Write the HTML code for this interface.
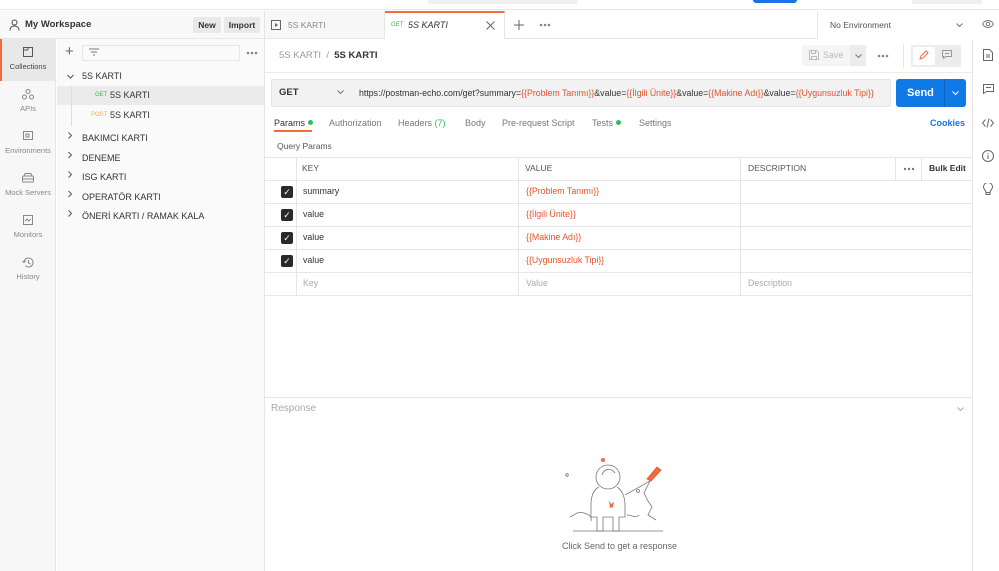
<!DOCTYPE html>
<html><head><meta charset="utf-8"><style>
*{box-sizing:border-box;margin:0;padding:0}
body{width:999px;height:571px;overflow:hidden;font-family:"Liberation Sans",sans-serif;font-size:9px;color:#333;background:#fff;position:relative}
.a{position:absolute}
.red{color:#e5532d}
.dots{position:absolute;width:12px;height:4px}
</style></head><body>
<div class="a" style="left:0;top:0;width:999px;height:10px;background:#fff;border-bottom:1px solid #e8e8e8"></div>
<div class="a" style="left:428px;top:0;width:150px;height:4px;background:#f0f0f0;border-radius:0 0 3px 3px"></div>
<div class="a" style="left:753px;top:0;width:44px;height:3px;background:#1a73e8;border-radius:0 0 3px 3px"></div>
<div class="a" style="left:912px;top:0;width:70px;height:4px;background:#f0f0f0"></div>
<!-- left header -->
<div class="a" style="left:0;top:11px;width:265px;height:28px;background:#f9f9f9;border-bottom:1px solid #e6e6e6;border-right:1px solid #e6e6e6"></div>
<svg class="a" style="left:9px;top:19px" width="11" height="12" viewBox="0 0 11 12" fill="none" stroke="#444" stroke-width="1"><circle cx="5.5" cy="3.5" r="2.5"/><path d="M1 11.5c0-3 2-4.5 4.5-4.5s4.5 1.5 4.5 4.5"/></svg>
<div class="a" style="left:25px;top:19px;font-size:9.5px;font-weight:bold;color:#333">My Workspace</div>
<div class="a" style="left:193px;top:17px;width:28px;height:16px;background:#e9e9e9;border-radius:2px;font-size:8.5px;font-weight:bold;text-align:center;line-height:16px">New</div>
<div class="a" style="left:224px;top:17px;width:36px;height:16px;background:#e9e9e9;border-radius:2px;font-size:8.5px;font-weight:bold;text-align:center;line-height:16px">Import</div>
<!-- icon rail -->
<div class="a" style="left:0;top:39px;width:56px;height:532px;background:#f7f7f7;border-right:1px solid #e6e6e6"></div>
<div class="a" style="left:0;top:39px;width:56px;height:42px;background:#e8e8e8;border-left:2px solid #f26b3a"></div>
<svg class="a" style="left:23px;top:47px" width="10" height="10" viewBox="0 0 10 10" fill="none" stroke="#555"><rect x=".5" y=".5" width="9" height="9"/><path d="M.5 3h4l1-2.5"/></svg>
<div class="a" style="left:0;top:62px;width:56px;text-align:center;font-size:7.5px;color:#444">Collections</div>
<svg class="a" style="left:22px;top:89px" width="12" height="11" viewBox="0 0 12 11" fill="none" stroke="#888"><circle cx="6" cy="2.5" r="2"/><circle cx="2.5" cy="8" r="2"/><circle cx="9.5" cy="8" r="2"/></svg>
<div class="a" style="left:0;top:104px;width:56px;text-align:center;font-size:7.5px;color:#888">APIs</div>
<svg class="a" style="left:23px;top:131px" width="10" height="10" viewBox="0 0 10 10" fill="none" stroke="#888"><rect x=".5" y=".5" width="9" height="8"/><rect x="3" y="3" width="3" height="3"/></svg>
<div class="a" style="left:0;top:146px;width:56px;text-align:center;font-size:7.5px;color:#888">Environments</div>
<svg class="a" style="left:22px;top:173px" width="12" height="10" viewBox="0 0 12 10" fill="none" stroke="#888"><rect x=".5" y="3" width="11" height="6" rx="1"/><path d="M2 3l1-2.5h6L10 3M.5 6h11"/></svg>
<div class="a" style="left:0;top:188px;width:56px;text-align:center;font-size:7.5px;color:#888">Mock Servers</div>
<svg class="a" style="left:23px;top:215px" width="10" height="10" viewBox="0 0 10 10" fill="none" stroke="#888"><rect x=".5" y=".5" width="9" height="9"/><path d="M2 6l2-2 1.5 2L8 4"/></svg>
<div class="a" style="left:0;top:230px;width:56px;text-align:center;font-size:7.5px;color:#888">Monitors</div>
<svg class="a" style="left:22px;top:257px" width="12" height="11" viewBox="0 0 12 11" fill="none" stroke="#888"><path d="M2 5.5a4.5 4.5 0 1 1 1.3 3.2M.5 4l1.5 1.5L3.5 4M6.5 3v3l2 1"/></svg>
<div class="a" style="left:0;top:272px;width:56px;text-align:center;font-size:7.5px;color:#888">History</div>
<!-- tree -->
<div class="a" style="left:57px;top:39px;width:208px;height:532px;background:#fafafa;border-right:1px solid #e6e6e6"></div>
<div class="a" style="left:65px;top:44px;font-size:15px;color:#666;line-height:15px">+</div>
<div class="a" style="left:82px;top:45px;width:158px;height:16px;border:1px solid #e6e6e6;background:#fafafa"></div>
<svg class="a" style="left:89px;top:48px" width="10" height="8" viewBox="0 0 10 8" stroke="#777"><path d="M0 1h10M2 4h6M4 7h2"/></svg>
<svg class="dots" style="left:246px;top:51px" viewBox="0 0 12 4" fill="#888"><circle cx="2" cy="2" r="1.3"/><circle cx="6" cy="2" r="1.3"/><circle cx="10" cy="2" r="1.3"/></svg>
<svg class="a" style="left:67px;top:74px" width="7" height="5" viewBox="0 0 7 5" fill="none" stroke="#555"><path d="M.5.5l3 3-3 3" transform="rotate(90 3.5 2.5) translate(1.5 -1)"/></svg>
<div class="a" style="left:82px;top:71px;font-size:9px;color:#333">5S KARTI</div>
<div class="a" style="left:57px;top:86px;width:207px;height:19px;background:#ebebeb"></div>
<div class="a" style="left:71px;top:86px;width:1px;height:40px;background:#ddd"></div>
<div class="a" style="left:95px;top:92px;font-size:6px;color:#2ebd59">GET</div>
<div class="a" style="left:110px;top:90px;font-size:9px">5S KARTI</div>
<div class="a" style="left:91px;top:112px;font-size:6px;color:#f5b342">POST</div>
<div class="a" style="left:110px;top:110px;font-size:9px">5S KARTI</div>
<svg class="a" style="left:68px;top:132px" width="5" height="90" viewBox="0 0 5 90" fill="none" stroke="#555"><path d="M.5.5l3 3-3 3M.5 20l3 3-3 3M.5 39.5l3 3-3 3M.5 59l3 3-3 3M.5 78.5l3 3-3 3"/></svg>
<div class="a" style="left:82px;top:129px;line-height:19.5px;font-size:9px;color:#333">BAKIMCI KARTI<br>DENEME<br>ISG KARTI<br>OPERATÖR KARTI<br>ÖNERİ KARTI / RAMAK KALA</div>
<!-- tabs row -->
<div class="a" style="left:265px;top:11px;width:707px;height:28px;border-bottom:1px solid #e6e6e6;background:#fff"></div>
<div class="a" style="left:265px;top:11px;width:120px;height:28px;background:#f7f7f7;border-right:1px solid #e6e6e6;border-bottom:1px solid #e6e6e6"></div>
<svg class="a" style="left:271px;top:20px" width="10" height="10" viewBox="0 0 10 10"><rect x=".5" y=".5" width="9" height="9" fill="none" stroke="#666"/><path d="M4 3l3 2-3 2z" fill="#666"/></svg>
<div class="a" style="left:288px;top:20px;font-size:8.5px;color:#888">5S KARTI</div>
<div class="a" style="left:385px;top:11px;width:120px;height:28px;background:#fff;border-top:2px solid #f26b3a;border-right:1px solid #e6e6e6"></div>
<div class="a" style="left:391px;top:22px;font-size:6px;color:#2ebd59;font-style:italic">GET</div>
<div class="a" style="left:408px;top:20px;font-size:9px;font-style:italic;color:#333">5S KARTI</div>
<svg class="a" style="left:486px;top:21px" width="9" height="9" viewBox="0 0 9 9" stroke="#666"><path d="M.5.5l8 8M8.5.5l-8 8"/></svg>
<svg class="a" style="left:514px;top:20px" width="10" height="10" viewBox="0 0 10 10" stroke="#666"><path d="M5 0v10M0 5h10"/></svg>
<svg class="dots" style="left:539px;top:23px" viewBox="0 0 12 4" fill="#888"><circle cx="2" cy="2" r="1.3"/><circle cx="6" cy="2" r="1.3"/><circle cx="10" cy="2" r="1.3"/></svg>
<div class="a" style="left:817px;top:11px;width:155px;height:28px;border-left:1px solid #e6e6e6;background:#fff"></div>
<div class="a" style="left:830px;top:20px;font-size:8.5px;color:#555">No Environment</div>
<svg class="a" style="left:956px;top:23px" width="7" height="5" viewBox="0 0 7 5" fill="none" stroke="#777"><path d="M.5.5l3 3 3-3"/></svg>
<svg class="a" style="left:982px;top:20px" width="12" height="8" viewBox="0 0 12 8" fill="none" stroke="#777"><path d="M.5 4C2 1.5 4 .5 6 .5s4 1 5.5 3.5C10 6.5 8 7.5 6 7.5S2 6.5.5 4z"/><circle cx="6" cy="4" r="1.7"/></svg>
<!-- right rail -->
<div class="a" style="left:972px;top:39px;width:27px;height:532px;background:#fff;border-left:1px solid #e6e6e6"></div>
<svg class="a" style="left:983px;top:49px" width="10" height="12" viewBox="0 0 10 12" fill="none" stroke="#666"><path d="M.5.5h6l3 3v8h-9z M3 6h4M3 8h4"/></svg>
<svg class="a" style="left:983px;top:84px" width="11" height="10" viewBox="0 0 11 10" fill="none" stroke="#666"><path d="M.5.5h10v7h-7l-3 2z M3 3.5h5"/></svg>
<svg class="a" style="left:982px;top:118px" width="12" height="10" viewBox="0 0 12 10" fill="none" stroke="#666"><path d="M3.5 1.5L.5 5l3 3.5M8.5 1.5l3 3.5-3 3.5M7 .5L5 9.5"/></svg>
<svg class="a" style="left:982px;top:150px" width="12" height="12" viewBox="0 0 12 12" fill="none" stroke="#666"><circle cx="6" cy="6" r="5.5"/><path d="M6 5v4M6 3v1"/></svg>
<svg class="a" style="left:983px;top:183px" width="10" height="12" viewBox="0 0 10 12" fill="none" stroke="#666"><path d="M3 9.5h4v2H3z M3 9.5C3 7 .5 6.5.5 4a4.5 4.5 0 0 1 9 0c0 2.5-2.5 3-2.5 5.5"/></svg>
<!-- breadcrumb -->
<div class="a" style="left:265px;top:72px;width:707px;height:1px;background:#ececec"></div>
<div class="a" style="left:279px;top:50px;font-size:9.5px;color:#999">5S KARTI&nbsp; / &nbsp;<span style="color:#333;font-weight:bold">5S KARTI</span></div>
<div class="a" style="left:802px;top:45px;width:48px;height:21px;background:#f5f5f5;border-radius:2px;font-size:9px;color:#bbb;line-height:21px;padding-left:21px">Save</div>
<svg class="a" style="left:809px;top:50px" width="10" height="10" viewBox="0 0 10 10" fill="none" stroke="#bbb"><path d="M.5.5h7l2 2v7h-9z M2.5.5v3h4v-3 M2.5 9.5v-3h5v3"/></svg>
<div class="a" style="left:850px;top:45px;width:16px;height:21px;background:#ececec"></div>
<svg class="a" style="left:855px;top:54px" width="7" height="5" viewBox="0 0 7 5" fill="none" stroke="#777"><path d="M.5.5l3 3 3-3"/></svg>
<svg class="dots" style="left:877px;top:54px" viewBox="0 0 12 4" fill="#888"><circle cx="2" cy="2" r="1.3"/><circle cx="6" cy="2" r="1.3"/><circle cx="10" cy="2" r="1.3"/></svg>
<div class="a" style="left:903px;top:44px;width:1px;height:24px;background:#e6e6e6"></div>
<div class="a" style="left:911px;top:45px;width:50px;height:22px;background:#ececec;border-radius:2px"></div>
<div class="a" style="left:913px;top:47px;width:22px;height:18px;background:#fff;border-radius:2px"></div>
<svg class="a" style="left:919px;top:50px" width="10" height="10" viewBox="0 0 10 10" fill="none" stroke="#f26b3a"><path d="M1 9l1-3 5-5 2 2-5 5z"/></svg>
<svg class="a" style="left:942px;top:50px" width="10" height="9" viewBox="0 0 10 9" fill="none" stroke="#999"><path d="M.5.5h9v6h-6l-2 2v-2h-1z M3 3.5h4"/></svg>
<!-- url row -->
<div class="a" style="left:271px;top:79px;width:81px;height:28px;background:#f2f2f2;border:1px solid #e6e6e6;border-radius:2px 0 0 2px"></div>
<div class="a" style="left:279px;top:87px;font-size:9.5px;font-weight:bold;color:#333">GET</div>
<svg class="a" style="left:337px;top:90px" width="7" height="5" viewBox="0 0 7 5" fill="none" stroke="#777"><path d="M.5.5l3 3 3-3"/></svg>
<div class="a" style="left:351px;top:79px;width:540px;height:28px;background:#f2f2f2;border:1px solid #e6e6e6;border-left:none;border-radius:0 2px 2px 0;overflow:hidden">
<div class="a" style="left:8px;top:8px;font-size:8.8px;color:#333;white-space:nowrap">https://postman-echo.com/get?summary=<span class="red">{{Problem Tanımı}}</span>&amp;value=<span class="red">{{İlgili Ünite}}</span>&amp;value=<span class="red">{{Makine Adı}}</span>&amp;value=<span class="red">{{Uygunsuzluk Tipi}}</span></div></div>
<div class="a" style="left:896px;top:79px;width:70px;height:28px;background:#0f7ae5;border-radius:3px"></div>
<div class="a" style="left:907px;top:87px;font-size:11px;font-weight:bold;color:#fff">Send</div>
<div class="a" style="left:944px;top:79px;width:1px;height:28px;background:#0b63bd"></div>
<svg class="a" style="left:952px;top:91px" width="7" height="5" viewBox="0 0 7 5" fill="none" stroke="#fff"><path d="M.5.5l3 3 3-3"/></svg>
<!-- req tabs -->
<div class="a" style="left:274px;top:118px;font-size:9px;color:#333;white-space:nowrap">Params <span style="display:inline-block;width:5px;height:5px;border-radius:50%;background:#2ebd59;vertical-align:1px"></span></div>
<div class="a" style="left:274px;top:130px;width:38px;height:2px;background:#f26b3a"></div>
<div class="a" style="left:329px;top:118px;font-size:9px;color:#777">Authorization</div>
<div class="a" style="left:398px;top:118px;font-size:9px;color:#777">Headers <span style="color:#2ebd59">(7)</span></div>
<div class="a" style="left:465px;top:118px;font-size:9px;color:#777">Body</div>
<div class="a" style="left:502px;top:118px;font-size:9px;color:#777">Pre-request Script</div>
<div class="a" style="left:592px;top:118px;font-size:9px;color:#777">Tests <span style="display:inline-block;width:5px;height:5px;border-radius:50%;background:#2ebd59;vertical-align:1px"></span></div>
<div class="a" style="left:639px;top:118px;font-size:9px;color:#777">Settings</div>
<div class="a" style="left:930px;top:118px;font-size:9px;color:#1a73e8;font-weight:bold">Cookies</div>
<div class="a" style="left:277px;top:141px;font-size:8.5px;color:#555">Query Params</div>
<!-- table -->
<div class="a" style="left:265px;top:157px;width:707px;height:139px;border-top:1px solid #e6e6e6">
<div class="a" style="left:0;top:22px;width:707px;height:1px;background:#e6e6e6"></div>
<div class="a" style="left:0;top:45px;width:707px;height:1px;background:#e6e6e6"></div>
<div class="a" style="left:0;top:68px;width:707px;height:1px;background:#e6e6e6"></div>
<div class="a" style="left:0;top:91px;width:707px;height:1px;background:#e6e6e6"></div>
<div class="a" style="left:0;top:114px;width:707px;height:1px;background:#e6e6e6"></div>
<div class="a" style="left:0;top:137px;width:707px;height:1px;background:#e6e6e6"></div>
<div class="a" style="left:31px;top:0;width:1px;height:138px;background:#e6e6e6"></div>
<div class="a" style="left:253px;top:0;width:1px;height:138px;background:#e6e6e6"></div>
<div class="a" style="left:475px;top:0;width:1px;height:138px;background:#e6e6e6"></div>
<div class="a" style="left:630px;top:0;width:1px;height:22px;background:#e6e6e6"></div>
<div class="a" style="left:656px;top:0;width:1px;height:22px;background:#e6e6e6"></div>
</div>
<div class="a" style="left:302px;top:163px;font-size:8.5px;color:#555">KEY</div>
<div class="a" style="left:525px;top:163px;font-size:8.5px;color:#555">VALUE</div>
<div class="a" style="left:748px;top:163px;font-size:8.5px;color:#555">DESCRIPTION</div>
<svg class="dots" style="left:903px;top:167px" viewBox="0 0 12 4" fill="#777"><circle cx="2" cy="2" r="1.2"/><circle cx="6" cy="2" r="1.2"/><circle cx="10" cy="2" r="1.2"/></svg>
<div class="a" style="left:929px;top:163px;font-size:8.5px;font-weight:bold;color:#333">Bulk Edit</div>
<div class="a" style="left:281px;top:186px;width:12px;height:12px;background:#2a2a2a;border-radius:2px;color:#fff;font-size:9px;line-height:12px;text-align:center">✓</div>
<div class="a" style="left:281px;top:209px;width:12px;height:12px;background:#2a2a2a;border-radius:2px;color:#fff;font-size:9px;line-height:12px;text-align:center">✓</div>
<div class="a" style="left:281px;top:232px;width:12px;height:12px;background:#2a2a2a;border-radius:2px;color:#fff;font-size:9px;line-height:12px;text-align:center">✓</div>
<div class="a" style="left:281px;top:255px;width:12px;height:12px;background:#2a2a2a;border-radius:2px;color:#fff;font-size:9px;line-height:12px;text-align:center">✓</div>
<div class="a" style="left:303px;top:180px;line-height:23px;font-size:8.8px;color:#333">summary<br>value<br>value<br>value<br><span style="color:#aaa">Key</span></div>
<div class="a red" style="left:526px;top:180px;line-height:23px;font-size:8.8px">{{Problem Tanımı}}<br>{{İlgili Ünite}}<br>{{Makine Adı}}<br>{{Uygunsuzluk Tipi}}<br><span style="color:#aaa">Value</span></div>
<div class="a" style="left:748px;top:272px;line-height:23px;font-size:8.8px;color:#aaa">Description</div>
<!-- response -->
<div class="a" style="left:265px;top:397px;width:707px;height:1px;background:#e6e6e6"></div>
<div class="a" style="left:271px;top:403px;font-size:10px;color:#aaa">Response</div>
<svg class="a" style="left:957px;top:407px" width="7" height="5" viewBox="0 0 7 5" fill="none" stroke="#aaa"><path d="M.5.5l3 3 3-3"/></svg>
<svg class="a" style="left:565px;top:455px" width="110" height="80" viewBox="0 0 110 80" fill="none" stroke="#777" stroke-width=".8">
<circle cx="38" cy="5" r="2" fill="#f26b3a" stroke="none"/>
<circle cx="43" cy="22" r="12"/><path d="M37 20a7 7 0 0 1 13-2"/>
<circle cx="2" cy="20" r="1.3"/><circle cx="73" cy="36" r="1.5"/>
<path d="M34 32c-6 3-8 10-8 18v12h6v14h6v-14h10v14h6v-14h6v-12c0-8-3-15-8-18"/>
<path d="M5 62c6-3 8-6 14-4s8 4 7 8"/>
<path d="M60 40l25-14-6 12 4 8 4 6-4 8 8 5"/>
<path d="M62 60c6 0 8 4 12 0"/>
<path d="M82 24l10-12 4 3-10 11z" fill="#f26b3a" stroke="#e5532d"/>
<path d="M8 76h90"/>
<path d="M44 45l2 4 3-2-1 5-3 1z" fill="#f26b3a" stroke="none"/>
</svg>
<div class="a" style="left:562px;top:541px;font-size:9px;color:#666">Click Send to get a response</div>
</body></html>
